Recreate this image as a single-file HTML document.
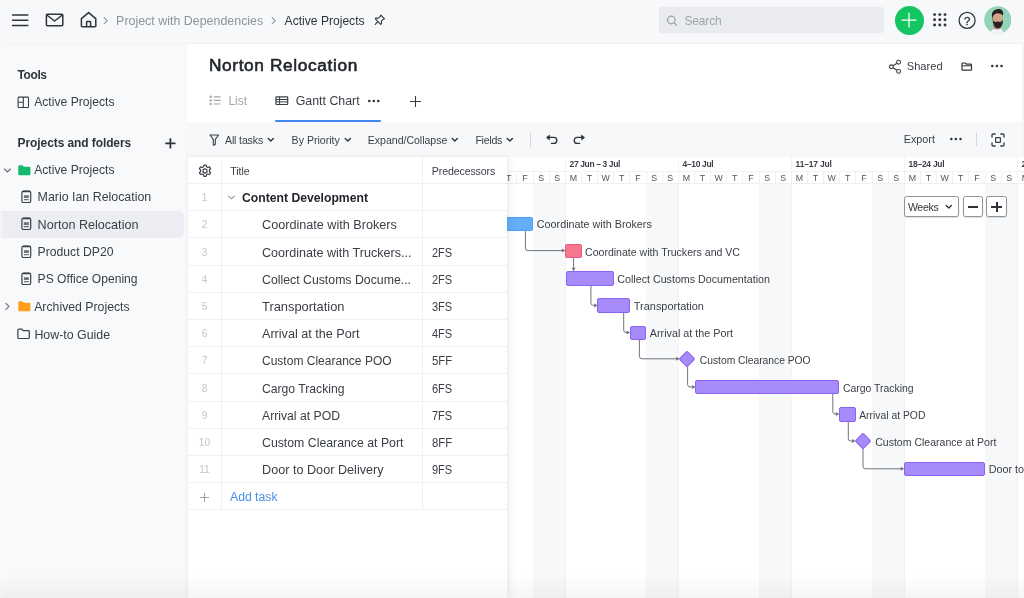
<!DOCTYPE html>
<html lang="en"><head><meta charset="utf-8"><title>Norton Relocation - Gantt Chart</title>
<style>
html,body{margin:0;padding:0}
body{width:1024px;height:598px;overflow:hidden;position:relative;background:#f8f9fa;font-family:"Liberation Sans", sans-serif;}
.t{position:absolute;white-space:nowrap;line-height:16px;height:16px}
#w{position:absolute;left:0;top:0;width:1024px;height:598px;overflow:hidden;will-change:transform;}
.r{position:absolute;box-sizing:border-box}
</style></head><body><div id="w">
<div class="r" style="left:0.0px;top:0.0px;width:1024.0px;height:42.5px;background:#f7f8fa;box-shadow:0 1px 2px rgba(0,0,0,.035);"></div>
<svg class="r" style="left:10.0px;top:10.0px;" width="20" height="20" viewBox="0 0 20 20" fill="none"><path d="M2.6 5h15.2M2.6 10.2h15.2M2.6 15.4h15.2" stroke="#303338" stroke-width="1.5" stroke-linecap="round"/></svg>
<svg class="r" style="left:44.0px;top:10.0px;" width="22" height="20" viewBox="0 0 22 20" fill="none"><rect x="2.4" y="4.2" width="16.4" height="11.6" rx="1" stroke="#303338" stroke-width="1.5"/><path d="M2.8 5l7.8 6 7.8-6" stroke="#303338" stroke-width="1.5" stroke-linejoin="round"/></svg>
<svg class="r" style="left:78.0px;top:9.0px;" width="22" height="22" viewBox="0 0 22 22" fill="none"><path d="M3.4 9.6L10.6 3.6l7.2 6V17a.8.8 0 0 1-.8.8H4.2a.8.8 0 0 1-.8-.8z" stroke="#303338" stroke-width="1.5" stroke-linejoin="round"/><path d="M8.6 17.6v-4.4a.6.6 0 0 1 .6-.6h2.8a.6.6 0 0 1 .6.6v4.4" stroke="#303338" stroke-width="1.5"/></svg>
<svg class="r" style="left:102.0px;top:15.0px;" width="8" height="11" viewBox="0 0 8 11" fill="none"><path d="M2.2 2.6l3 3-3 3" stroke="#8e939b" stroke-width="1.1" stroke-linecap="round" stroke-linejoin="round"/></svg>
<div class="t" style="left:116.1px;top:12.8px;font-size:12.42px;font-weight:400;color:#8e939b;letter-spacing:0.01px;">Project with Dependencies</div>
<svg class="r" style="left:270.0px;top:15.0px;" width="8" height="11" viewBox="0 0 8 11" fill="none"><path d="M2.2 2.6l3 3-3 3" stroke="#8e939b" stroke-width="1.1" stroke-linecap="round" stroke-linejoin="round"/></svg>
<div class="t" style="left:284.6px;top:12.8px;font-size:12.1px;font-weight:400;color:#303338;">Active Projects</div>
<svg class="r" style="left:372.6px;top:13.2px;" width="13.6" height="13.6" viewBox="0 0 16 16" fill="none"><path d="M9.2 2.4l4.4 4.4-1.5.5-2.2 2.2.2 2.8-1 1-6.4-6.4 1-1 2.8.2 2.2-2.2z" stroke="#303338" stroke-width="1.3" stroke-linejoin="round"/><path d="M5.6 10.4L2.6 13.4" stroke="#303338" stroke-width="1.3" stroke-linecap="round"/></svg>
<div class="r" style="left:658.8px;top:7.0px;width:225.6px;height:25.8px;background:#e9ebef;border-radius:3px;"></div>
<svg class="r" style="left:665.0px;top:13.0px;" width="14" height="14" viewBox="0 0 14 14" fill="none"><circle cx="6.300" cy="7" r="3.800" stroke="#9a9fa6" stroke-width="1.200"/><path d="M9.200 9.900l2.400 2.400" stroke="#9a9fa6" stroke-width="1.200" stroke-linecap="round"/></svg>
<div class="t" style="left:684.5px;top:13.2px;font-size:11.96px;font-weight:400;color:#a0a5ac;letter-spacing:-0.15px;">Search</div>
<div class="r" style="left:894.6px;top:5.6px;width:29.2px;height:29.2px;background:#13c662;border-radius:50%;"></div>
<svg class="r" style="left:900.2px;top:11.2px;" width="18" height="18" viewBox="0 0 18 18" fill="none"><path d="M9 2v14M2 9h14" stroke="#fff" stroke-width="1.250" stroke-linecap="round"/></svg>
<svg class="r" style="left:933.1px;top:13.3px;" width="14" height="14" viewBox="0 0 14 14" fill="none"><circle cx="1.6" cy="1.6" r="1.45" fill="#303338"/><circle cx="1.6" cy="6.800000000000001" r="1.45" fill="#303338"/><circle cx="1.6" cy="12.0" r="1.45" fill="#303338"/><circle cx="6.800000000000001" cy="1.6" r="1.45" fill="#303338"/><circle cx="6.800000000000001" cy="6.800000000000001" r="1.45" fill="#303338"/><circle cx="6.800000000000001" cy="12.0" r="1.45" fill="#303338"/><circle cx="12.0" cy="1.6" r="1.45" fill="#303338"/><circle cx="12.0" cy="6.800000000000001" r="1.45" fill="#303338"/><circle cx="12.0" cy="12.0" r="1.45" fill="#303338"/></svg>
<svg class="r" style="left:957.0px;top:10.0px;" width="20" height="20" viewBox="0 0 20 20" fill="none"><circle cx="10.100" cy="10.400" r="8" stroke="#303338" stroke-width="1.300"/><text x="10.100" y="14.600" text-anchor="middle" font-family="Liberation Sans, sans-serif" font-size="11.500" font-weight="400" fill="#303338" stroke="#303338" stroke-width="0.300">?</text></svg>
<svg class="r" style="left:983.8px;top:6.4px;" width="27.6" height="27.6" viewBox="0 0 27.6 27.6" fill="none"><defs><clipPath id="av"><circle cx="13.8" cy="13.8" r="13.6"/></clipPath></defs>
<g clip-path="url(#av)"><rect width="27.6" height="27.6" fill="#93d3b8"/>
<path d="M6.500 27.600c.4-3.200 2.600-5 5.600-5.600h3.400c2.200.6 3.600 2.400 4 5.600z" fill="#f1f3f6"/>
<path d="M9.600 16h7v6.600c-2 1.200-4.600 1.200-7 0z" fill="#b98a72"/>
<ellipse cx="13.700" cy="11.800" rx="5" ry="6" fill="#d3a58c"/>
<path d="M8.600 11.600c-.2-1 .2-1.800.6-2.400l-.2 4.800c.6 1.400 1.600 1.900 3.100 2 1.100-.6 2.500-.6 3.700 0 1.300-.2 2.500-.8 3.100-2.400.3 4.300-1 8.600-5 8.800-3.500 0-5.400-4.400-5.300-10.800z" fill="#2a2220"/>
<path d="M8.200 11.400c-1-3.600.400-7.400 4.800-8.200 3.200-.5 6.200.800 6.200 4.400 0 .8-.1 1.400-.4 2-1.200-1.600-3.400-2.400-6.400-2.200-1.800.4-3 1.600-4.200 4z" fill="#2b2321"/></g></svg>
<div class="t" style="left:17.6px;top:67.3px;font-size:11.96px;font-weight:700;color:#303338;letter-spacing:-0.40px;">Tools</div>
<svg class="r" style="left:17.0px;top:96.4px;" width="13" height="13" viewBox="0 0 13 13" fill="none"><rect x="1.100" y="1.100" width="10.400" height="10.400" rx="0.800" stroke="#3a3e45" stroke-width="1.100"/><path d="M6.300 1v10.600M1 6.300h5.300" stroke="#3a3e45" stroke-width="1.100"/></svg>
<div class="t" style="left:34.2px;top:94.0px;font-size:12.14px;font-weight:400;color:#3a3e45;letter-spacing:0.01px;">Active Projects</div>
<div class="t" style="left:17.6px;top:135.0px;font-size:11.96px;font-weight:700;color:#303338;letter-spacing:-0.07px;">Projects and folders</div>
<svg class="r" style="left:164.0px;top:137.0px;" width="12" height="12" viewBox="0 0 12 12" fill="none"><path d="M6.400 1.200v10.200M1.300 6.300h10.200" stroke="#303338" stroke-width="1.800"/></svg>
<div class="r" style="left:0.0px;top:211.0px;width:183.5px;height:27.0px;background:#ebedf2;border-radius:0 5px 5px 0;"></div>
<svg class="r" style="left:2.5px;top:166.0px;" width="9" height="9" viewBox="0 0 9 9" fill="none"><path d="M1.400 3l3 3 3-3" stroke="#6b7078" stroke-width="1.100" stroke-linecap="round" stroke-linejoin="round"/></svg>
<svg class="r" style="left:17.8px;top:164.6px;" width="13" height="11" viewBox="0 0 13 11" fill="none"><path d="M0.300 1.300a1 1 0 0 1 1-1h3.200l1.300 1.500h5.600a1 1 0 0 1 1 1v6.400a1 1 0 0 1-1 1h-10.100a1 1 0 0 1-1-1z" fill="#14b96c"/></svg>
<div class="t" style="left:34.2px;top:162.4px;font-size:12.14px;font-weight:400;color:#3a3e45;letter-spacing:0.01px;">Active Projects</div>
<svg class="r" style="left:21.1px;top:190.2px;" width="11" height="14" viewBox="0 0 11 14" fill="none"><rect x="0.900" y="1.100" width="8.800" height="11.400" rx="1.600" stroke="#3a3e45" stroke-width="1.200"/><path d="M2.600 1.500h5.600" stroke="#3a3e45" stroke-width="1.700" stroke-linecap="round"/><rect x="2.900" y="5.200" width="5" height="2.800" fill="#70747b"/><path d="M2.900 9.700h5" stroke="#3a3e45" stroke-width="0.900"/></svg>
<div class="t" style="left:37.6px;top:189.4px;font-size:12.4px;font-weight:400;color:#3a3e45;">Mario Ian Relocation</div>
<svg class="r" style="left:21.1px;top:217.4px;" width="11" height="14" viewBox="0 0 11 14" fill="none"><rect x="0.900" y="1.100" width="8.800" height="11.400" rx="1.600" stroke="#3a3e45" stroke-width="1.200"/><path d="M2.600 1.500h5.600" stroke="#3a3e45" stroke-width="1.700" stroke-linecap="round"/><rect x="2.900" y="5.200" width="5" height="2.800" fill="#70747b"/><path d="M2.900 9.700h5" stroke="#3a3e45" stroke-width="0.900"/></svg>
<div class="t" style="left:37.6px;top:216.6px;font-size:12.59px;font-weight:400;color:#3a3e45;letter-spacing:0.01px;">Norton Relocation</div>
<svg class="r" style="left:21.1px;top:244.6px;" width="11" height="14" viewBox="0 0 11 14" fill="none"><rect x="0.900" y="1.100" width="8.800" height="11.400" rx="1.600" stroke="#3a3e45" stroke-width="1.200"/><path d="M2.600 1.500h5.600" stroke="#3a3e45" stroke-width="1.700" stroke-linecap="round"/><rect x="2.900" y="5.200" width="5" height="2.800" fill="#70747b"/><path d="M2.900 9.700h5" stroke="#3a3e45" stroke-width="0.900"/></svg>
<div class="t" style="left:37.6px;top:243.6px;font-size:12.19px;font-weight:400;color:#3a3e45;">Product DP20</div>
<svg class="r" style="left:21.1px;top:271.8px;" width="11" height="14" viewBox="0 0 11 14" fill="none"><rect x="0.900" y="1.100" width="8.800" height="11.400" rx="1.600" stroke="#3a3e45" stroke-width="1.200"/><path d="M2.600 1.500h5.600" stroke="#3a3e45" stroke-width="1.700" stroke-linecap="round"/><rect x="2.900" y="5.200" width="5" height="2.800" fill="#70747b"/><path d="M2.900 9.700h5" stroke="#3a3e45" stroke-width="0.900"/></svg>
<div class="t" style="left:37.6px;top:271.0px;font-size:12.1px;font-weight:400;color:#3a3e45;">PS Office Opening</div>
<svg class="r" style="left:3.0px;top:301.5px;" width="9" height="9" viewBox="0 0 9 9" fill="none"><path d="M3 1.400l3 3-3 3" stroke="#6b7078" stroke-width="1.100" stroke-linecap="round" stroke-linejoin="round"/></svg>
<svg class="r" style="left:17.8px;top:300.8px;" width="13" height="11" viewBox="0 0 13 11" fill="none"><path d="M0.300 1.300a1 1 0 0 1 1-1h3.200l1.300 1.500h5.600a1 1 0 0 1 1 1v6.400a1 1 0 0 1-1 1h-10.100a1 1 0 0 1-1-1z" fill="#ff9f1a"/></svg>
<div class="t" style="left:34.2px;top:298.6px;font-size:12.27px;font-weight:400;color:#3a3e45;">Archived Projects</div>
<svg class="r" style="left:17.2px;top:327.6px;" width="14" height="12" viewBox="0 0 14 12" fill="none"><path d="M0.900 2a.8.8 0 0 1 .8-.8h3.100l1.300 1.500h5.400a.8.8 0 0 1 .8.800v6.200a.8.8 0 0 1-.8.800h-9.800a.8.8 0 0 1-.8-.8z" stroke="#3a3e45" stroke-width="1.200"/></svg>
<div class="t" style="left:34.4px;top:326.6px;font-size:12.4px;font-weight:400;color:#3a3e45;">How-to Guide</div>
<div class="r" style="left:187.0px;top:44.0px;width:837.0px;height:554.0px;background:#fff;box-shadow:0 0 2px rgba(0,0,0,.04);"></div>
<div class="t" style="left:208.9px;top:56.7px;font-size:17.3px;font-weight:400;color:#22262c;letter-spacing:0.63px;line-height:20px;height:20px;margin-top:-2px;-webkit-text-stroke:0.6px #22262c;">Norton Relocation</div>
<svg class="r" style="left:888.0px;top:59.0px;" width="15" height="16" viewBox="0 0 15 16" fill="none"><circle cx="10.600" cy="3.200" r="1.900" stroke="#3a3e45" stroke-width="1.100"/><circle cx="3.400" cy="7.800" r="1.900" stroke="#3a3e45" stroke-width="1.100"/><circle cx="10.600" cy="12.400" r="1.900" stroke="#3a3e45" stroke-width="1.100"/><path d="M5.100 6.800l3.800-2.500M5.100 8.800l3.800 2.500" stroke="#3a3e45" stroke-width="1.100"/></svg>
<div class="t" style="left:906.8px;top:58.0px;font-size:11.1px;font-weight:400;color:#3a3e45;">Shared</div>
<svg class="r" style="left:961.2px;top:62.3px;" width="13" height="10" viewBox="0 0 13 10" fill="none"><path d="M1 1.600a.6.6 0 0 1 .6-.6h2.600l1.100 1.200h4.600a.6.6 0 0 1 .6.600v4.700a.6.6 0 0 1-.6.600h-8.300a.6.6 0 0 1-.6-.6z" stroke="#303338" stroke-width="1.200"/><path d="M1.200 3.800h9.200" stroke="#303338" stroke-width="1"/></svg>
<svg class="r" style="left:991.4px;top:64.2px;" width="14" height="4" viewBox="0 0 14 4" fill="none"><circle cx="1.3" cy="2" r="1.3" fill="#303338"/><circle cx="5.8999999999999995" cy="2" r="1.3" fill="#303338"/><circle cx="10.5" cy="2" r="1.3" fill="#303338"/></svg>
<svg class="r" style="left:208.5px;top:94.5px;" width="13" height="11" viewBox="0 0 13 11" fill="none"><path d="M4.600 1.800h7M4.600 5.400h7M4.600 9h7" stroke="#a2a7ae" stroke-width="1.200"/><circle cx="1.700" cy="1.800" r="1.200" fill="#a2a7ae"/><circle cx="1.700" cy="5.400" r="1.200" fill="#a2a7ae"/><circle cx="1.700" cy="9" r="1.200" fill="#a2a7ae"/></svg>
<div class="t" style="left:228.4px;top:92.9px;font-size:12.08px;font-weight:400;color:#a2a7ae;">List</div>
<svg class="r" style="left:275.0px;top:96.2px;" width="14" height="10" viewBox="0 0 14 10" fill="none"><rect x="0.900" y="0.900" width="11.800" height="7.600" rx="0.800" stroke="#3a3e45" stroke-width="1.200"/><path d="M1 3.500h11.600M1 5.900h11.600M4.600 1v7.600" stroke="#3a3e45" stroke-width="1"/></svg>
<div class="t" style="left:295.7px;top:92.9px;font-size:12.38px;font-weight:400;color:#3a3e45;">Gantt Chart</div>
<svg class="r" style="left:368.4px;top:98.6px;" width="14" height="4" viewBox="0 0 14 4" fill="none"><circle cx="1.3" cy="2" r="1.3" fill="#303338"/><circle cx="5.8" cy="2" r="1.3" fill="#303338"/><circle cx="10.3" cy="2" r="1.3" fill="#303338"/></svg>
<svg class="r" style="left:409.0px;top:95.0px;" width="13" height="13" viewBox="0 0 13 13" fill="none"><path d="M6.500 1v11M1 6.500h11" stroke="#3a3e45" stroke-width="1.100"/></svg>
<div class="r" style="left:274.6px;top:119.6px;width:106.8px;height:2.2px;background:#4285f4;border-radius:1px;"></div>
<div class="r" style="left:187.0px;top:121.8px;width:837.0px;height:34.8px;background:#f7f8f9;"></div>
<svg class="r" style="left:208.6px;top:134.0px;" width="11" height="12" viewBox="0 0 11 12" fill="none"><path d="M1 1h8.600l-3.300 4.400v5l-2 .8v-5.800z" stroke="#3a3e45" stroke-width="1.100" stroke-linejoin="round"/></svg>
<div class="t" style="left:225.0px;top:132.2px;font-size:10.58px;font-weight:400;color:#3a3e45;letter-spacing:-0.15px;">All tasks</div>
<svg class="r" style="left:266.7px;top:137.4px;" width="8" height="6" viewBox="0 0 8 6" fill="none"><path d="M1.200 1.400l2.600 2.600 2.600-2.600" stroke="#303338" stroke-width="1.400" stroke-linecap="round" stroke-linejoin="round"/></svg>
<div class="t" style="left:291.6px;top:132.2px;font-size:10.6px;font-weight:400;color:#3a3e45;">By Priority</div>
<svg class="r" style="left:343.6px;top:137.4px;" width="8" height="6" viewBox="0 0 8 6" fill="none"><path d="M1.200 1.400l2.600 2.600 2.600-2.600" stroke="#303338" stroke-width="1.400" stroke-linecap="round" stroke-linejoin="round"/></svg>
<div class="t" style="left:367.8px;top:132.2px;font-size:10.58px;font-weight:400;color:#3a3e45;letter-spacing:-0.03px;">Expand/Collapse</div>
<svg class="r" style="left:450.8px;top:137.4px;" width="8" height="6" viewBox="0 0 8 6" fill="none"><path d="M1.200 1.400l2.600 2.600 2.600-2.600" stroke="#303338" stroke-width="1.400" stroke-linecap="round" stroke-linejoin="round"/></svg>
<div class="t" style="left:475.4px;top:132.2px;font-size:10.58px;font-weight:400;color:#3a3e45;letter-spacing:-0.24px;">Fields</div>
<svg class="r" style="left:506.0px;top:137.4px;" width="8" height="6" viewBox="0 0 8 6" fill="none"><path d="M1.200 1.400l2.600 2.600 2.600-2.600" stroke="#303338" stroke-width="1.400" stroke-linecap="round" stroke-linejoin="round"/></svg>
<div class="r" style="left:530.0px;top:132.8px;width:1.0px;height:14.0px;background:#d4d7dc;"></div>
<svg class="r" style="left:545.0px;top:133.0px;" width="14" height="12" viewBox="0 0 14 12" fill="none"><path d="M1 4.400l3.800-3v6z" fill="#303338"/><path d="M4.400 4.400h4.400a3 3 0 0 1 0 6h-2.400" stroke="#303338" stroke-width="1.300" stroke-linecap="round"/></svg>
<svg class="r" style="left:572.0px;top:133.0px;" width="14" height="12" viewBox="0 0 14 12" fill="none"><path d="M13 4.400l-3.800-3v6z" fill="#303338"/><path d="M9.600 4.400h-4.400a3 3 0 0 0 0 6h2.400" stroke="#303338" stroke-width="1.300" stroke-linecap="round"/></svg>
<div class="t" style="left:903.7px;top:131.2px;font-size:10.79px;font-weight:400;color:#3a3e45;letter-spacing:0.01px;">Export</div>
<svg class="r" style="left:949.6px;top:137.2px;" width="14" height="4" viewBox="0 0 14 4" fill="none"><circle cx="1.3" cy="2" r="1.25" fill="#303338"/><circle cx="5.8999999999999995" cy="2" r="1.25" fill="#303338"/><circle cx="10.5" cy="2" r="1.25" fill="#303338"/></svg>
<div class="r" style="left:976.0px;top:133.2px;width:1.0px;height:12.6px;background:#d4d7dc;"></div>
<svg class="r" style="left:990.6px;top:132.6px;" width="14" height="14" viewBox="0 0 14 14" fill="none"><path d="M1 4.200v-2.200a1 1 0 0 1 1-1h2.200M9.800 1h2.200a1 1 0 0 1 1 1v2.200M13 9.800v2.200a1 1 0 0 1-1 1h-2.200M4.200 13h-2.200a1 1 0 0 1-1-1v-2.200" stroke="#3a3e45" stroke-width="1.300" stroke-linecap="round"/><rect x="4.600" y="4.600" width="4.800" height="4.800" rx="0.600" stroke="#3a3e45" stroke-width="1.200"/></svg>
<div class="r" style="left:533.0px;top:183.4px;width:32.3px;height:420.0px;background:#f7f8f9;"></div>
<div class="r" style="left:646.0px;top:183.4px;width:32.3px;height:420.0px;background:#f7f8f9;"></div>
<div class="r" style="left:759.0px;top:183.4px;width:32.3px;height:420.0px;background:#f7f8f9;"></div>
<div class="r" style="left:872.0px;top:183.4px;width:32.3px;height:420.0px;background:#f7f8f9;"></div>
<div class="r" style="left:985.0px;top:183.4px;width:32.3px;height:420.0px;background:#f7f8f9;"></div>
<div class="r" style="left:1098.0px;top:183.4px;width:32.3px;height:420.0px;background:#f7f8f9;"></div>
<div class="r" style="left:564.8px;top:156.6px;width:1.0px;height:442.0px;background:#f2f3f5;"></div>
<div class="r" style="left:677.8px;top:156.6px;width:1.0px;height:442.0px;background:#f2f3f5;"></div>
<div class="r" style="left:790.8px;top:156.6px;width:1.0px;height:442.0px;background:#f2f3f5;"></div>
<div class="r" style="left:903.8px;top:156.6px;width:1.0px;height:442.0px;background:#f2f3f5;"></div>
<div class="r" style="left:1016.8px;top:156.6px;width:1.0px;height:442.0px;background:#f2f3f5;"></div>
<div class="r" style="left:507.0px;top:170.8px;width:520.0px;height:1.0px;background:#f1f2f4;"></div>
<div class="r" style="left:507.0px;top:183.0px;width:520.0px;height:1.0px;background:#eff0f2;"></div>
<div class="t" style="left:569.6px;top:156.2px;font-size:8.46px;font-weight:700;color:#3a3e45;letter-spacing:-0.36px;">27 Jun – 3 Jul</div>
<div class="t" style="left:682.6px;top:156.2px;font-size:8.46px;font-weight:700;color:#3a3e45;letter-spacing:-0.34px;">4–10 Jul</div>
<div class="t" style="left:795.6px;top:156.2px;font-size:8.46px;font-weight:700;color:#3a3e45;letter-spacing:-0.18px;">11–17 Jul</div>
<div class="t" style="left:908.6px;top:156.2px;font-size:8.46px;font-weight:700;color:#3a3e45;letter-spacing:-0.26px;">18–24 Jul</div>
<div class="t" style="left:1021.6px;top:156.2px;font-size:9.2px;font-weight:700;color:#3a3e45;letter-spacing:-0.10px;">25–31 Jul</div>
<div class="r" style="left:500.2px;top:171.5px;width:1.0px;height:11.5px;background:#f0f1f3;"></div>
<div class="t" style="left:500.7px;top:170.4px;width:16.14px;text-align:center;font-size:8.8px;color:#50555c;">T</div>
<div class="r" style="left:516.4px;top:171.5px;width:1.0px;height:11.5px;background:#f0f1f3;"></div>
<div class="t" style="left:516.9px;top:170.4px;width:16.14px;text-align:center;font-size:8.8px;color:#50555c;">F</div>
<div class="r" style="left:532.5px;top:171.5px;width:1.0px;height:11.5px;background:#f0f1f3;"></div>
<div class="t" style="left:533.0px;top:170.4px;width:16.14px;text-align:center;font-size:8.8px;color:#50555c;">S</div>
<div class="r" style="left:548.7px;top:171.5px;width:1.0px;height:11.5px;background:#f0f1f3;"></div>
<div class="t" style="left:549.2px;top:170.4px;width:16.14px;text-align:center;font-size:8.8px;color:#50555c;">S</div>
<div class="r" style="left:564.8px;top:171.5px;width:1.0px;height:11.5px;background:#f0f1f3;"></div>
<div class="t" style="left:565.3px;top:170.4px;width:16.14px;text-align:center;font-size:8.8px;color:#50555c;">M</div>
<div class="r" style="left:580.9px;top:171.5px;width:1.0px;height:11.5px;background:#f0f1f3;"></div>
<div class="t" style="left:581.4px;top:170.4px;width:16.14px;text-align:center;font-size:8.8px;color:#50555c;">T</div>
<div class="r" style="left:597.1px;top:171.5px;width:1.0px;height:11.5px;background:#f0f1f3;"></div>
<div class="t" style="left:597.6px;top:170.4px;width:16.14px;text-align:center;font-size:8.8px;color:#50555c;">W</div>
<div class="r" style="left:613.2px;top:171.5px;width:1.0px;height:11.5px;background:#f0f1f3;"></div>
<div class="t" style="left:613.7px;top:170.4px;width:16.14px;text-align:center;font-size:8.8px;color:#50555c;">T</div>
<div class="r" style="left:629.4px;top:171.5px;width:1.0px;height:11.5px;background:#f0f1f3;"></div>
<div class="t" style="left:629.9px;top:170.4px;width:16.14px;text-align:center;font-size:8.8px;color:#50555c;">F</div>
<div class="r" style="left:645.5px;top:171.5px;width:1.0px;height:11.5px;background:#f0f1f3;"></div>
<div class="t" style="left:646.0px;top:170.4px;width:16.14px;text-align:center;font-size:8.8px;color:#50555c;">S</div>
<div class="r" style="left:661.7px;top:171.5px;width:1.0px;height:11.5px;background:#f0f1f3;"></div>
<div class="t" style="left:662.2px;top:170.4px;width:16.14px;text-align:center;font-size:8.8px;color:#50555c;">S</div>
<div class="r" style="left:677.8px;top:171.5px;width:1.0px;height:11.5px;background:#f0f1f3;"></div>
<div class="t" style="left:678.3px;top:170.4px;width:16.14px;text-align:center;font-size:8.8px;color:#50555c;">M</div>
<div class="r" style="left:693.9px;top:171.5px;width:1.0px;height:11.5px;background:#f0f1f3;"></div>
<div class="t" style="left:694.4px;top:170.4px;width:16.14px;text-align:center;font-size:8.8px;color:#50555c;">T</div>
<div class="r" style="left:710.1px;top:171.5px;width:1.0px;height:11.5px;background:#f0f1f3;"></div>
<div class="t" style="left:710.6px;top:170.4px;width:16.14px;text-align:center;font-size:8.8px;color:#50555c;">W</div>
<div class="r" style="left:726.2px;top:171.5px;width:1.0px;height:11.5px;background:#f0f1f3;"></div>
<div class="t" style="left:726.7px;top:170.4px;width:16.14px;text-align:center;font-size:8.8px;color:#50555c;">T</div>
<div class="r" style="left:742.4px;top:171.5px;width:1.0px;height:11.5px;background:#f0f1f3;"></div>
<div class="t" style="left:742.9px;top:170.4px;width:16.14px;text-align:center;font-size:8.8px;color:#50555c;">F</div>
<div class="r" style="left:758.5px;top:171.5px;width:1.0px;height:11.5px;background:#f0f1f3;"></div>
<div class="t" style="left:759.0px;top:170.4px;width:16.14px;text-align:center;font-size:8.8px;color:#50555c;">S</div>
<div class="r" style="left:774.7px;top:171.5px;width:1.0px;height:11.5px;background:#f0f1f3;"></div>
<div class="t" style="left:775.2px;top:170.4px;width:16.14px;text-align:center;font-size:8.8px;color:#50555c;">S</div>
<div class="r" style="left:790.8px;top:171.5px;width:1.0px;height:11.5px;background:#f0f1f3;"></div>
<div class="t" style="left:791.3px;top:170.4px;width:16.14px;text-align:center;font-size:8.8px;color:#50555c;">M</div>
<div class="r" style="left:806.9px;top:171.5px;width:1.0px;height:11.5px;background:#f0f1f3;"></div>
<div class="t" style="left:807.4px;top:170.4px;width:16.14px;text-align:center;font-size:8.8px;color:#50555c;">T</div>
<div class="r" style="left:823.1px;top:171.5px;width:1.0px;height:11.5px;background:#f0f1f3;"></div>
<div class="t" style="left:823.6px;top:170.4px;width:16.14px;text-align:center;font-size:8.8px;color:#50555c;">W</div>
<div class="r" style="left:839.2px;top:171.5px;width:1.0px;height:11.5px;background:#f0f1f3;"></div>
<div class="t" style="left:839.7px;top:170.4px;width:16.14px;text-align:center;font-size:8.8px;color:#50555c;">T</div>
<div class="r" style="left:855.4px;top:171.5px;width:1.0px;height:11.5px;background:#f0f1f3;"></div>
<div class="t" style="left:855.9px;top:170.4px;width:16.14px;text-align:center;font-size:8.8px;color:#50555c;">F</div>
<div class="r" style="left:871.5px;top:171.5px;width:1.0px;height:11.5px;background:#f0f1f3;"></div>
<div class="t" style="left:872.0px;top:170.4px;width:16.14px;text-align:center;font-size:8.8px;color:#50555c;">S</div>
<div class="r" style="left:887.7px;top:171.5px;width:1.0px;height:11.5px;background:#f0f1f3;"></div>
<div class="t" style="left:888.2px;top:170.4px;width:16.14px;text-align:center;font-size:8.8px;color:#50555c;">S</div>
<div class="r" style="left:903.8px;top:171.5px;width:1.0px;height:11.5px;background:#f0f1f3;"></div>
<div class="t" style="left:904.3px;top:170.4px;width:16.14px;text-align:center;font-size:8.8px;color:#50555c;">M</div>
<div class="r" style="left:919.9px;top:171.5px;width:1.0px;height:11.5px;background:#f0f1f3;"></div>
<div class="t" style="left:920.4px;top:170.4px;width:16.14px;text-align:center;font-size:8.8px;color:#50555c;">T</div>
<div class="r" style="left:936.1px;top:171.5px;width:1.0px;height:11.5px;background:#f0f1f3;"></div>
<div class="t" style="left:936.6px;top:170.4px;width:16.14px;text-align:center;font-size:8.8px;color:#50555c;">W</div>
<div class="r" style="left:952.2px;top:171.5px;width:1.0px;height:11.5px;background:#f0f1f3;"></div>
<div class="t" style="left:952.7px;top:170.4px;width:16.14px;text-align:center;font-size:8.8px;color:#50555c;">T</div>
<div class="r" style="left:968.4px;top:171.5px;width:1.0px;height:11.5px;background:#f0f1f3;"></div>
<div class="t" style="left:968.9px;top:170.4px;width:16.14px;text-align:center;font-size:8.8px;color:#50555c;">F</div>
<div class="r" style="left:984.5px;top:171.5px;width:1.0px;height:11.5px;background:#f0f1f3;"></div>
<div class="t" style="left:985.0px;top:170.4px;width:16.14px;text-align:center;font-size:8.8px;color:#50555c;">S</div>
<div class="r" style="left:1000.7px;top:171.5px;width:1.0px;height:11.5px;background:#f0f1f3;"></div>
<div class="t" style="left:1001.2px;top:170.4px;width:16.14px;text-align:center;font-size:8.8px;color:#50555c;">S</div>
<div class="r" style="left:1016.8px;top:171.5px;width:1.0px;height:11.5px;background:#f0f1f3;"></div>
<div class="t" style="left:1017.3px;top:170.4px;width:16.14px;text-align:center;font-size:8.8px;color:#50555c;">M</div>
<div class="r" style="left:1032.9px;top:171.5px;width:1.0px;height:11.5px;background:#f0f1f3;"></div>
<div class="t" style="left:1033.4px;top:170.4px;width:16.14px;text-align:center;font-size:8.8px;color:#50555c;">T</div>
<svg class="r" style="left:0;top:0" width="1024" height="598" fill="none"><path d="M525.4 230.5V248.1Q525.4 250.6 527.9 250.6H563.8" stroke="#6f747b" stroke-width="1"/><path d="M565.3 250.6l-3.400 -2v4z" fill="#6f747b"/></svg>
<svg class="r" style="left:0;top:0" width="1024" height="598" fill="none"><path d="M573.6 258V269.7" stroke="#6f747b" stroke-width="1"/><path d="M573.6 271.2l-2 -3.400h4z" fill="#6f747b"/></svg>
<svg class="r" style="left:0;top:0" width="1024" height="598" fill="none"><path d="M590.9 285V302.9Q590.9 305.4 593.4 305.4H596.1" stroke="#6f747b" stroke-width="1"/><path d="M597.6 305.4l-3.400 -2v4z" fill="#6f747b"/></svg>
<svg class="r" style="left:0;top:0" width="1024" height="598" fill="none"><path d="M623.7 312V330.1Q623.7 332.6 626.2 332.6H628.5" stroke="#6f747b" stroke-width="1"/><path d="M630 332.6l-3.400 -2v4z" fill="#6f747b"/></svg>
<svg class="r" style="left:0;top:0" width="1024" height="598" fill="none"><path d="M639.4 339.6V356.3Q639.4 358.8 641.9 358.8H678.1" stroke="#6f747b" stroke-width="1"/><path d="M679.6 358.8l-3.400 -2v4z" fill="#6f747b"/></svg>
<svg class="r" style="left:0;top:0" width="1024" height="598" fill="none"><path d="M687.6 367V384.5Q687.6 387 690.1 387H694.0" stroke="#6f747b" stroke-width="1"/><path d="M695.5 387l-3.400 -2v4z" fill="#6f747b"/></svg>
<svg class="r" style="left:0;top:0" width="1024" height="598" fill="none"><path d="M832.8 394V411.5Q832.8 414 835.3 414H837.7" stroke="#6f747b" stroke-width="1"/><path d="M839.2 414l-3.400 -2v4z" fill="#6f747b"/></svg>
<svg class="r" style="left:0;top:0" width="1024" height="598" fill="none"><path d="M848.3 421.4V438.5Q848.3 441 850.8 441H853.9" stroke="#6f747b" stroke-width="1"/><path d="M855.4 441l-3.400 -2v4z" fill="#6f747b"/></svg>
<svg class="r" style="left:0;top:0" width="1024" height="598" fill="none"><path d="M863 449V466.3Q863 468.8 865.5 468.8H902.7" stroke="#6f747b" stroke-width="1"/><path d="M904.2 468.8l-3.400 -2v4z" fill="#6f747b"/></svg>
<div class="r" style="left:499.5px;top:216.8px;width:33.5px;height:14.4px;background:#62aef8;border:1px solid #4f9fee;border-radius:2px;"></div>
<div class="r" style="left:564.8px;top:244.0px;width:17.0px;height:14.4px;background:#f8768f;border:1px solid #e8597a;border-radius:2px;"></div>
<div class="r" style="left:565.5px;top:271.2px;width:48.5px;height:14.4px;background:#a78bfa;border:1px solid #8b62f0;border-radius:2px;"></div>
<div class="r" style="left:597.0px;top:298.4px;width:33.2px;height:14.4px;background:#a78bfa;border:1px solid #8b62f0;border-radius:2px;"></div>
<div class="r" style="left:629.5px;top:325.6px;width:16.9px;height:14.4px;background:#a78bfa;border:1px solid #8b62f0;border-radius:2px;"></div>
<div class="r" style="left:681.3px;top:353.1px;width:12.0px;height:12.0px;background:#a78bfa;border:1px solid #8b62f0;border-radius:1.5px;transform:rotate(45deg);"></div>
<div class="r" style="left:695.0px;top:380.0px;width:144.4px;height:14.4px;background:#a78bfa;border:1px solid #8b62f0;border-radius:2px;"></div>
<div class="r" style="left:838.7px;top:407.2px;width:16.9px;height:14.4px;background:#a78bfa;border:1px solid #8b62f0;border-radius:2px;"></div>
<div class="r" style="left:856.8px;top:434.7px;width:12.0px;height:12.0px;background:#a78bfa;border:1px solid #8b62f0;border-radius:1.5px;transform:rotate(45deg);"></div>
<div class="r" style="left:903.7px;top:461.6px;width:81.1px;height:14.4px;background:#a78bfa;border:1px solid #8b62f0;border-radius:2px;"></div>
<div class="t" style="left:536.8px;top:216.4px;font-size:10.79px;font-weight:400;color:#3a3e45;">Coordinate with Brokers</div>
<div class="t" style="left:585.0px;top:243.6px;font-size:10.57px;font-weight:400;color:#3a3e45;">Coordinate with Truckers and VC</div>
<div class="t" style="left:617.3px;top:270.8px;font-size:10.7px;font-weight:400;color:#3a3e45;">Collect Customs Documentation</div>
<div class="t" style="left:633.8px;top:298.0px;font-size:10.95px;font-weight:400;color:#3a3e45;">Transportation</div>
<div class="t" style="left:649.8px;top:325.2px;font-size:10.78px;font-weight:400;color:#3a3e45;">Arrival at the Port</div>
<div class="t" style="left:699.8px;top:353.4px;font-size:10.3px;font-weight:400;color:#3a3e45;letter-spacing:-0.01px;">Custom Clearance POO</div>
<div class="t" style="left:843.0px;top:380.6px;font-size:10.41px;font-weight:400;color:#3a3e45;">Cargo Tracking</div>
<div class="t" style="left:859.2px;top:407.8px;font-size:10.37px;font-weight:400;color:#3a3e45;">Arrival at POD</div>
<div class="t" style="left:875.2px;top:434.0px;font-size:10.54px;font-weight:400;color:#3a3e45;">Custom Clearance at Port</div>
<div class="t" style="left:988.7px;top:461.2px;font-size:10.79px;font-weight:400;color:#3a3e45;">Door to Door Delivery</div>
<div class="r" style="left:904.0px;top:196.2px;width:55.0px;height:20.6px;background:#fff;border:1px solid #8f9297;border-radius:2.5px;box-shadow:0 1px 1px rgba(0,0,0,.12);"></div>
<div class="t" style="left:907.9px;top:198.8px;font-size:10.58px;font-weight:400;color:#33373d;letter-spacing:-0.31px;">Weeks</div>
<svg class="r" style="left:945.4px;top:203.6px;" width="8" height="6" viewBox="0 0 8 6" fill="none"><path d="M1.200 1.400l2.600 2.600 2.600-2.600" stroke="#33373d" stroke-width="1.400" stroke-linecap="round" stroke-linejoin="round"/></svg>
<div class="r" style="left:962.8px;top:196.2px;width:20.2px;height:20.6px;background:#fff;border:1px solid #8f9297;border-radius:2.5px;box-shadow:0 1px 1px rgba(0,0,0,.12);"></div>
<div class="r" style="left:967.5px;top:205.7px;width:10.8px;height:2.0px;background:#2f333a;"></div>
<div class="r" style="left:986.4px;top:196.2px;width:20.2px;height:20.6px;background:#fff;border:1px solid #8f9297;border-radius:2.5px;box-shadow:0 1px 1px rgba(0,0,0,.12);"></div>
<div class="r" style="left:991.3px;top:205.7px;width:10.4px;height:2.0px;background:#2f333a;"></div>
<div class="r" style="left:995.5px;top:201.5px;width:2.0px;height:10.4px;background:#2f333a;"></div>
<div class="r" style="left:187.0px;top:156.6px;width:320.4px;height:442.0px;background:#fff;box-shadow:3px 0 6px rgba(0,0,0,.07);"></div>
<div class="r" style="left:187.0px;top:182.9px;width:320.4px;height:1.0px;background:#eef0f2;"></div>
<div class="r" style="left:187.0px;top:210.1px;width:320.4px;height:1.0px;background:#eef0f2;"></div>
<div class="r" style="left:187.0px;top:237.3px;width:320.4px;height:1.0px;background:#eef0f2;"></div>
<div class="r" style="left:187.0px;top:264.5px;width:320.4px;height:1.0px;background:#eef0f2;"></div>
<div class="r" style="left:187.0px;top:291.7px;width:320.4px;height:1.0px;background:#eef0f2;"></div>
<div class="r" style="left:187.0px;top:318.9px;width:320.4px;height:1.0px;background:#eef0f2;"></div>
<div class="r" style="left:187.0px;top:346.1px;width:320.4px;height:1.0px;background:#eef0f2;"></div>
<div class="r" style="left:187.0px;top:373.3px;width:320.4px;height:1.0px;background:#eef0f2;"></div>
<div class="r" style="left:187.0px;top:400.5px;width:320.4px;height:1.0px;background:#eef0f2;"></div>
<div class="r" style="left:187.0px;top:427.7px;width:320.4px;height:1.0px;background:#eef0f2;"></div>
<div class="r" style="left:187.0px;top:454.9px;width:320.4px;height:1.0px;background:#eef0f2;"></div>
<div class="r" style="left:187.0px;top:482.1px;width:320.4px;height:1.0px;background:#eef0f2;"></div>
<div class="r" style="left:187.0px;top:509.3px;width:320.4px;height:1.0px;background:#eef0f2;"></div>
<div class="r" style="left:186.8px;top:156.6px;width:1.0px;height:442.0px;background:#eef0f2;"></div>
<div class="r" style="left:220.7px;top:156.6px;width:1.0px;height:353.4px;background:#eef0f2;"></div>
<div class="r" style="left:422.4px;top:156.6px;width:1.0px;height:353.4px;background:#eef0f2;"></div>
<svg class="r" style="left:198.2px;top:163.7px;" width="14" height="14" viewBox="0 0 13 13" fill="none"><circle cx="6.500" cy="6.500" r="1.900" stroke="#3a3e45" stroke-width="1.100"/><path d="M5.500 1h2l.4 1.500 1.300.7 1.500-.5 1 1.700-1.100 1.100v1.500l1.100 1.100-1 1.700-1.500-.5-1.300.7-.4 1.500h-2l-.4-1.500-1.300-.7-1.500.5-1-1.700 1.100-1.100v-1.500l-1.100-1.100 1-1.700 1.500.5 1.300-.7z" stroke="#3a3e45" stroke-width="1.100" stroke-linejoin="round"/></svg>
<div class="t" style="left:230.2px;top:163.0px;font-size:10.58px;font-weight:400;color:#3a3e45;letter-spacing:-0.02px;">Title</div>
<div class="t" style="left:431.8px;top:163.0px;font-size:10.58px;font-weight:400;color:#3a3e45;letter-spacing:-0.11px;">Predecessors</div>
<div class="t" style="left:188px;top:190.2px;width:33px;text-align:center;font-size:10.2px;color:#c2c5ca;">1</div>
<svg class="r" style="left:227.2px;top:193.0px;" width="9" height="9" viewBox="0 0 9 9" fill="none"><path d="M1.600 3l2.900 2.900 2.900-2.900" stroke="#60656c" stroke-width="1" stroke-linecap="round" stroke-linejoin="round"/></svg>
<div class="t" style="left:242.0px;top:190.2px;font-size:12.19px;font-weight:700;color:#22262c;">Content Development</div>
<div class="t" style="left:188px;top:217.4px;width:33px;text-align:center;font-size:10.2px;color:#c2c5ca;">2</div>
<div class="t" style="left:262.0px;top:217.4px;font-size:12.65px;font-weight:400;color:#3a3e45;">Coordinate with Brokers</div>
<div class="t" style="left:188px;top:244.6px;width:33px;text-align:center;font-size:10.2px;color:#c2c5ca;">3</div>
<div class="t" style="left:262.0px;top:244.6px;font-size:12.57px;font-weight:400;color:#3a3e45;">Coordinate with Truckers...</div>
<div class="t" style="left:431.6px;top:244.6px;font-size:12.6px;font-weight:400;color:#3a3e45;transform:scaleX(0.874);transform-origin:0 50%;">2FS</div>
<div class="t" style="left:188px;top:271.8px;width:33px;text-align:center;font-size:10.2px;color:#c2c5ca;">4</div>
<div class="t" style="left:262.0px;top:271.8px;font-size:12.3px;font-weight:400;color:#3a3e45;">Collect Customs Docume...</div>
<div class="t" style="left:431.6px;top:271.8px;font-size:12.6px;font-weight:400;color:#3a3e45;transform:scaleX(0.874);transform-origin:0 50%;">2FS</div>
<div class="t" style="left:188px;top:299.0px;width:33px;text-align:center;font-size:10.2px;color:#c2c5ca;">5</div>
<div class="t" style="left:262.0px;top:299.0px;font-size:12.87px;font-weight:400;color:#3a3e45;">Transportation</div>
<div class="t" style="left:431.6px;top:299.0px;font-size:12.6px;font-weight:400;color:#3a3e45;transform:scaleX(0.874);transform-origin:0 50%;">3FS</div>
<div class="t" style="left:188px;top:326.2px;width:33px;text-align:center;font-size:10.2px;color:#c2c5ca;">6</div>
<div class="t" style="left:262.0px;top:326.2px;font-size:12.62px;font-weight:400;color:#3a3e45;">Arrival at the Port</div>
<div class="t" style="left:431.6px;top:326.2px;font-size:12.6px;font-weight:400;color:#3a3e45;transform:scaleX(0.874);transform-origin:0 50%;">4FS</div>
<div class="t" style="left:188px;top:353.4px;width:33px;text-align:center;font-size:10.2px;color:#c2c5ca;">7</div>
<div class="t" style="left:262.0px;top:353.4px;font-size:12.01px;font-weight:400;color:#3a3e45;letter-spacing:0.01px;">Custom Clearance POO</div>
<div class="t" style="left:431.6px;top:353.4px;font-size:12.6px;font-weight:400;color:#3a3e45;transform:scaleX(0.902);transform-origin:0 50%;">5FF</div>
<div class="t" style="left:188px;top:380.6px;width:33px;text-align:center;font-size:10.2px;color:#c2c5ca;">8</div>
<div class="t" style="left:262.0px;top:380.6px;font-size:12.17px;font-weight:400;color:#3a3e45;">Cargo Tracking</div>
<div class="t" style="left:431.6px;top:380.6px;font-size:12.6px;font-weight:400;color:#3a3e45;transform:scaleX(0.874);transform-origin:0 50%;">6FS</div>
<div class="t" style="left:188px;top:407.8px;width:33px;text-align:center;font-size:10.2px;color:#c2c5ca;">9</div>
<div class="t" style="left:262.0px;top:407.8px;font-size:12.21px;font-weight:400;color:#3a3e45;">Arrival at POD</div>
<div class="t" style="left:431.6px;top:407.8px;font-size:12.6px;font-weight:400;color:#3a3e45;transform:scaleX(0.874);transform-origin:0 50%;">7FS</div>
<div class="t" style="left:188px;top:435.0px;width:33px;text-align:center;font-size:10.2px;color:#c2c5ca;">10</div>
<div class="t" style="left:262.0px;top:435.0px;font-size:12.3px;font-weight:400;color:#3a3e45;">Custom Clearance at Port</div>
<div class="t" style="left:431.6px;top:435.0px;font-size:12.6px;font-weight:400;color:#3a3e45;transform:scaleX(0.902);transform-origin:0 50%;">8FF</div>
<div class="t" style="left:188px;top:462.2px;width:33px;text-align:center;font-size:10.2px;color:#c2c5ca;">11</div>
<div class="t" style="left:262.0px;top:462.2px;font-size:12.64px;font-weight:400;color:#3a3e45;letter-spacing:0.01px;">Door to Door Delivery</div>
<div class="t" style="left:431.6px;top:462.2px;font-size:12.6px;font-weight:400;color:#3a3e45;transform:scaleX(0.874);transform-origin:0 50%;">9FS</div>
<svg class="r" style="left:199.0px;top:491.7px;" width="11" height="11" viewBox="0 0 11 11" fill="none"><path d="M5.500 1v9M1 5.500h9" stroke="#9ea3aa" stroke-width="1"/></svg>
<div class="t" style="left:230.0px;top:489.2px;font-size:12.21px;font-weight:400;color:#4a8fe8;">Add task</div>
<div class="r" style="left:1022.0px;top:43.0px;width:2.0px;height:113.6px;background:#f3f4f6;"></div>
<div class="r" style="left:0.0px;top:43.0px;width:4.0px;height:555.0px;background:linear-gradient(90deg, rgba(255,255,255,.45), rgba(255,255,255,0));"></div>
<div class="r" style="left:0.0px;top:574.0px;width:1024.0px;height:24.0px;background:linear-gradient(180deg, rgba(0,0,0,0), rgba(0,0,0,.04));"></div>
</div></body></html>
